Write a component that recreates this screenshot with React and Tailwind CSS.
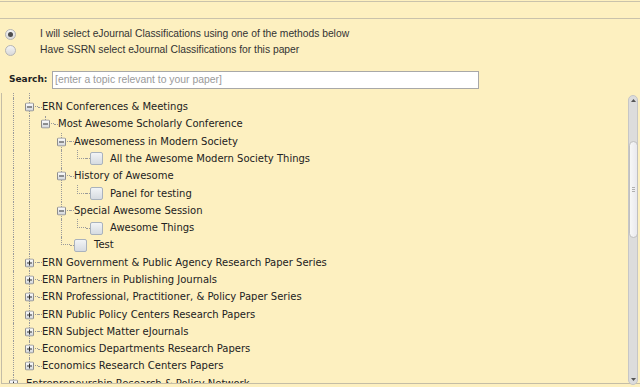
import React from "react";

const rows = [
  { d: 1, t: "ERN Conferences & Meetings", k: "open", g: [1] },
  { d: 2, t: "Most Awesome Scholarly Conference", k: "open", last: true, g: [1, 1] },
  { d: 3, t: "Awesomeness in Modern Society", k: "open", g: [1, 1, 0] },
  { d: 4, t: "All the Awesome Modern Society Things", k: "leaf", last: true, g: [1, 1, 0, 1] },
  { d: 3, t: "History of Awesome", k: "open", g: [1, 1, 0] },
  { d: 4, t: "Panel for testing", k: "leaf", last: true, g: [1, 1, 0, 1] },
  { d: 3, t: "Special Awesome Session", k: "open", g: [1, 1, 0] },
  { d: 4, t: "Awesome Things", k: "leaf", last: true, g: [1, 1, 0, 1] },
  { d: 3, t: "Test", k: "leaf", last: true, g: [1, 1, 0] },
  { d: 1, t: "ERN Government & Public Agency Research Paper Series", k: "closed", g: [1] },
  { d: 1, t: "ERN Partners in Publishing Journals", k: "closed", g: [1] },
  { d: 1, t: "ERN Professional, Practitioner, & Policy Paper Series", k: "closed", g: [1] },
  { d: 1, t: "ERN Public Policy Centers Research Papers", k: "closed", g: [1] },
  { d: 1, t: "ERN Subject Matter eJournals", k: "closed", g: [1] },
  { d: 1, t: "Economics Departments Research Papers", k: "closed", g: [1] },
  { d: 1, t: "Economics Research Centers Papers", k: "closed", last: true, g: [1] },
  { d: 0, t: "Entrepreneurship Research & Policy Network", k: "closed", g: [] },
];

const Guide = ({ on }) => (
  <div className="w-4 h-full shrink-0">
    {on ? <div className="ml-[7px] h-full border-l border-dotted border-[#9a9a9a]" /> : null}
  </div>
);

const Toggle = ({ open }) => (
  <svg width="9" height="9" viewBox="0 0 9 9">
    <defs>
      <linearGradient id="tg" x1="0" y1="0" x2="0" y2="1">
        <stop offset="0" stopColor="#ffffff" />
        <stop offset="1" stopColor="#cfd3d8" />
      </linearGradient>
    </defs>
    <rect x="0.5" y="0.5" width="8" height="8" rx="1" fill="url(#tg)" stroke="#8d8d8d" />
    <line x1="2" y1="4.5" x2="7" y2="4.5" stroke="#333" />
    {open ? null : <line x1="4.5" y1="2" x2="4.5" y2="7" stroke="#333" />}
  </svg>
);

const Row = ({ r }) => (
  <div className="flex items-center h-[17.3px] shrink-0">
    {r.g.map((on, i) => (
      <Guide key={i} on={on} />
    ))}
    <div className="relative w-4 h-full shrink-0 flex flex-col">
      <div className="ml-[7px] h-1/2 border-l border-b border-dotted border-[#9a9a9a]" />
      {r.last ? null : <div className="ml-[7px] h-1/2 border-l border-dotted border-[#9a9a9a]" />}
      {r.k !== "leaf" ? (
        <div className="absolute left-[3px] top-1/2 -translate-y-1/2 flex">
          <Toggle open={r.k === "open"} />
        </div>
      ) : null}
    </div>
    <div className="w-1 h-px border-t border-dotted border-[#9a9a9a] shrink-0" />
    {r.k === "leaf" ? (
      <div className="w-[13px] h-[13px] rounded-[2px] border border-[#a9b2bd] bg-gradient-to-b from-[#f2f4f6] to-[#d6dbe1] mr-[7px] shrink-0" />
    ) : null}
    <span className="whitespace-nowrap text-[10px] text-[#222] leading-none" style={{ fontFamily: '"DejaVu Sans", Verdana, sans-serif' }}>
      {r.t}
    </span>
  </div>
);

const Radio = ({ checked, label }) => (
  <div className="flex items-center h-4">
    <div className="ml-[5px] w-[11px] h-[11px] rounded-full border border-[#b5b5b5] bg-gradient-to-b from-[#f4f4f4] to-[#d9d9d9] flex items-center justify-center">
      {checked ? <div className="w-[5px] h-[5px] rounded-full bg-[#4d4d4d]" /> : null}
    </div>
    <span className="ml-[24px] text-[10.3px] text-[#333]">{label}</span>
  </div>
);

export default function App() {
  return (
    <div
      className="w-[640px] h-[387px] overflow-hidden bg-[#fdf0c0] pt-px"
      style={{ fontFamily: '"Liberation Sans", Arial, sans-serif' }}
    >
      <div className="h-[18px] border-y border-[#c9c2ab]" />

      <div className="mt-[7px]">
        <Radio checked label="I will select eJournal Classifications using one of the methods below" />
        <Radio label="Have SSRN select eJournal Classifications for this paper" />
      </div>

      <div className="mt-[13px] flex items-center h-[18px]">
        <span
          className="ml-[9px] w-[43px] font-bold text-[9px] text-[#222]"
          style={{ fontFamily: '"DejaVu Sans", Verdana, sans-serif' }}
        >
          Search:
        </span>
        <div className="w-[427px] h-[18px] bg-white border border-[#a8a8a8] flex items-center px-[2px]">
          <span className="text-[10.4px] text-[#9a9a9a]">[enter a topic relevant to your paper]</span>
        </div>
      </div>

      <div className="mt-[4px] ml-px h-[291px] border-l border-b border-[#c4bda6] flex">
        <div className="flex-1 overflow-hidden pl-[4px] flex flex-col">
          <div className="flex h-[5.4px] shrink-0">
            <Guide on />
            <Guide on />
          </div>
          {rows.map((r, i) => (
            <Row key={i} r={r} />
          ))}
        </div>
        <div className="w-[10px] mr-[2px] mt-[2px] mb-[-2px] rounded-full border border-[#c6c6c6] bg-[#dcdcdc] flex flex-col items-center">
          <div className="h-[8px] flex items-center">
            <svg width="5" height="3" viewBox="0 0 5 3">
              <path d="M0 3 L2.5 0 L5 3 Z" fill="#555" />
            </svg>
          </div>
          <div className="h-[37px]" />
          <div className="w-[9px] h-[97px] rounded-full border border-[#c0c0c0] bg-gradient-to-r from-[#f7f7f7] to-[#e9e9ee] flex items-center justify-center">
            <div className="flex flex-col gap-px">
              <div className="w-[3px] h-px bg-[#b0b0b0]" />
              <div className="w-[3px] h-px bg-[#b0b0b0]" />
              <div className="w-[3px] h-px bg-[#b0b0b0]" />
            </div>
          </div>
          <div className="flex-1" />
          <div className="h-[6px] flex items-start">
            <svg width="5" height="3" viewBox="0 0 5 3">
              <path d="M0 0 L2.5 3 L5 0 Z" fill="#555" />
            </svg>
          </div>
        </div>
      </div>
    </div>
  );
}
